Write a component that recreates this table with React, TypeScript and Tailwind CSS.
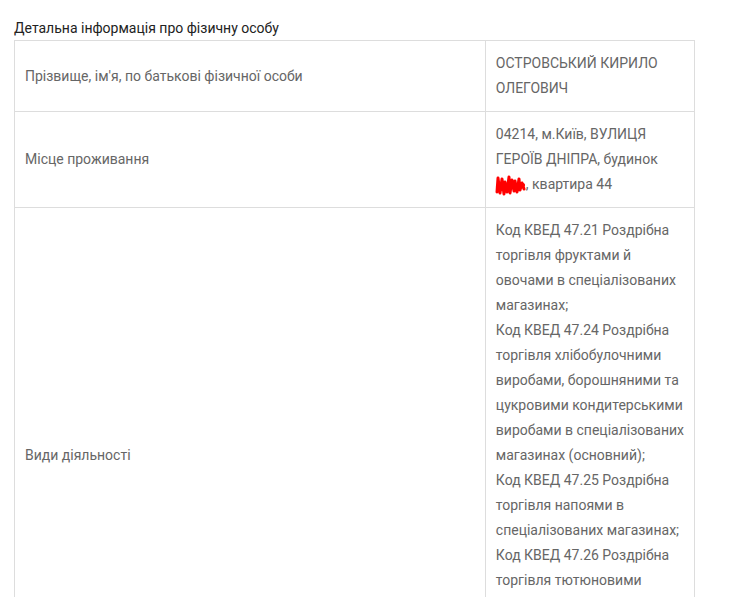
const FONT = "font-['Roboto','Noto_Sans',sans-serif]";

const activities = [
  "Код КВЕД 47.21 Роздрібна",
  "торгівля фруктами й",
  "овочами в спеціалізованих",
  "магазинах;",
  "Код КВЕД 47.24 Роздрібна",
  "торгівля хлібобулочними",
  "виробами, борошняними та",
  "цукровими кондитерськими",
  "виробами в спеціалізованих",
  "магазинах (основний);",
  "Код КВЕД 47.25 Роздрібна",
  "торгівля напоями в",
  "спеціалізованих магазинах;",
  "Код КВЕД 47.26 Роздрібна",
  "торгівля тютюновими",
  "виробами в",
  "спеціалізованих магазинах;",
  "Код КВЕД 47.29 Інші види",
  "роздрібної торгівлі.",
];

// hand-drawn red redaction over the house number
function Scribble() {
  return (
    <svg width="31" height="22" viewBox="0 0 31 22" className="inline-block align-[-7px] -ml-[1px]">
      <path
        d="M2 18 L3 4 L5 19 L7 5 L9 20 L10 8 L12 18 L14 3 L15 19 L17 6 L19 17 L20 7 L22 18 L24 5 L25 16 L27 9 L29 15"
        fill="none"
        stroke="#ff0000"
        strokeWidth="3"
        strokeLinejoin="round"
        strokeLinecap="round"
      />
      <path d="M3 13 C10 10 18 15 28 11" fill="none" stroke="#ff0000" strokeWidth="4" strokeLinecap="round" />
    </svg>
  );
}

function Lines({ lines }: { lines: string[] }) {
  return (
    <>
      {lines.map((line, i) => (
        <span key={i} className="block whitespace-nowrap">
          {line}
        </span>
      ))}
    </>
  );
}

export default function App() {
  return (
    <div className={`${FONT} bg-white min-h-[597px] pl-[14px] pt-[17px] text-[14px]`}>
      <div className="text-[#222] leading-[22px] mb-[1px]">Детальна інформація про фізичну особу</div>
      <table className="border-collapse w-[681px] text-[#666] leading-[25px]">
        <tbody>
          <tr>
            <td className="border border-[#ddd] w-[472px] px-[10px] py-[10px] align-middle">
              Прізвище, ім'я, по батькові фізичної особи
            </td>
            <td className="border border-[#ddd] px-[10px] py-[10px] align-top">
              <Lines lines={["ОСТРОВСЬКИЙ КИРИЛО", "ОЛЕГОВИЧ"]} />
            </td>
          </tr>
          <tr>
            <td className="border border-[#ddd] px-[10px] py-[10px] align-middle">Місце проживання</td>
            <td className="border border-[#ddd] px-[10px] py-[10px] align-top">
              <Lines lines={["04214, м.Київ, ВУЛИЦЯ", "ГЕРОЇВ ДНІПРА, будинок"]} />
              <span className="block whitespace-nowrap">
                <Scribble />, квартира 44
              </span>
            </td>
          </tr>
          <tr>
            <td className="border border-[#ddd] px-[10px] py-[10px] align-middle">Види діяльності</td>
            <td className="border border-[#ddd] px-[10px] py-[10px] align-top">
              <Lines lines={activities} />
            </td>
          </tr>
        </tbody>
      </table>
    </div>
  );
}
